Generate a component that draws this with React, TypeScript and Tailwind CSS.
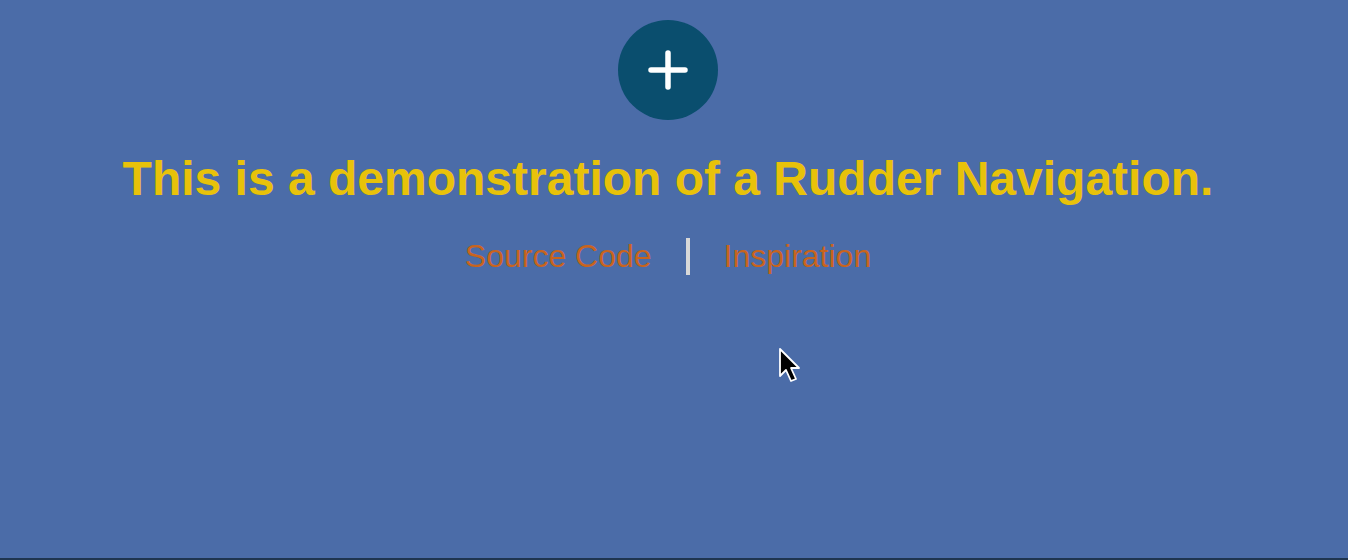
import React from "react";

export default function App() {
  return (
    <div className="relative w-[1348px] h-[560px] bg-[#4b6ca8] overflow-hidden border-b-2 border-[#1f3550]" style={{ fontFamily: '"Liberation Sans", Arial, sans-serif' }}>
      <div className="w-[1336px] flex flex-col items-center pt-[20px]">
        <div className="w-[100px] h-[100px] rounded-full bg-[#0a4e6e] flex items-center justify-center">
          <svg width="44" height="44" viewBox="0 0 44 44">
            <path d="M22 5 V39 M5 22 H39" stroke="white" strokeWidth="5.5" strokeLinecap="round" />
          </svg>
        </div>
        <h1 className="mt-[31px] text-[48px] leading-[56px] font-bold text-[#e8c20a] whitespace-nowrap">
          This is a demonstration of a Rudder Navigation.
        </h1>
        <div className="mt-[29px] flex items-center text-[32px] leading-[40px] text-[#c8641e]">
          <a>Source Code</a>
          <span className="mx-[34px] w-[4px] h-[37px] bg-[#d8d8d8]" />
          <a>Inspiration</a>
        </div>
      </div>
      <svg className="absolute left-[778px] top-[347px]" width="26" height="38" viewBox="0 0 26 38">
        <path d="M2 2 L2 29 L8 23 L13 34 L18 32 L13 21 L21 21 Z" fill="black" stroke="white" strokeWidth="1.8" strokeLinejoin="round" />
      </svg>
    </div>
  );
}
